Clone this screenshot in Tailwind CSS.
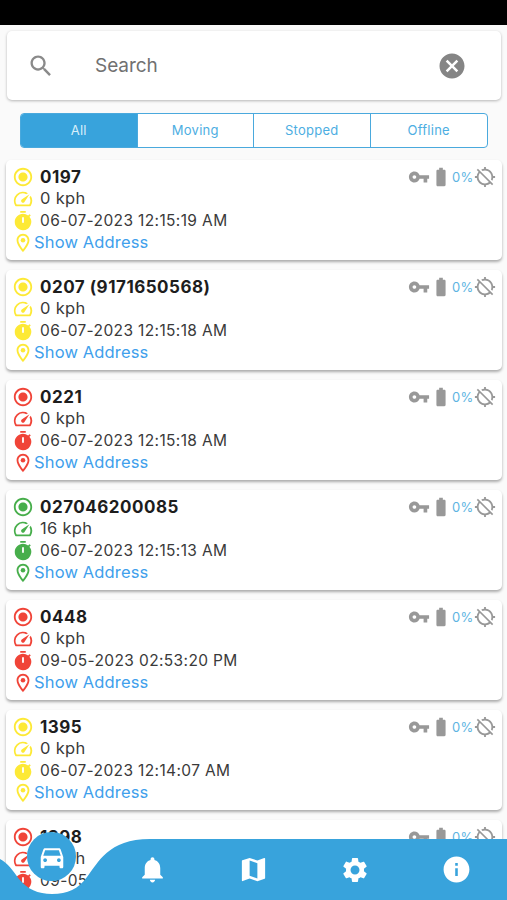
<!DOCTYPE html>
<html lang="en">
<head>
<meta charset="utf-8">
<title>Vehicles</title>
<script src="https://cdn.jsdelivr.net/npm/@tailwindcss/browser@4"></script>
</head>
<body class="bg-[#fafafa] overflow-hidden font-['Inter','Liberation_Sans',sans-serif]">
<svg class="hidden">
  <symbol id="radio" viewBox="0 0 24 24"><path d="M12 7c-2.760 0-5 2.240-5 5s2.240 5 5 5 5-2.240 5-5-2.240-5-5-5zm0-5C6.480 2 2 6.480 2 12s4.480 10 10 10 10-4.480 10-10S17.520 2 12 2zm0 18c-4.420 0-8-3.580-8-8s3.580-8 8-8 8 3.580 8 8-3.580 8-8 8z"/></symbol>
  <symbol id="speed" viewBox="0 0 24 24"><path d="M20.380 8.570l-1.230 1.850a8 8 0 0 1-.22 7.580H5.070A8 8 0 0 1 15.580 6.850l1.850-1.230A10 10 0 0 0 3.350 19a2 2 0 0 0 1.720 1h13.850a2 2 0 0 0 1.740-1 10 10 0 0 0-.27-10.440zm-9.790 6.840a2 2 0 0 0 2.830 0l5.660-8.490-8.490 5.660a2 2 0 0 0 0 2.830z"/></symbol>
  <symbol id="timer" viewBox="0 0 24 24"><path d="M19.030 7.390l1.420-1.420c-.43-.51-.9-.99-1.410-1.410l-1.420 1.420A8.960 8.960 0 0 0 12 4c-4.970 0-9 4.030-9 9s4.020 9 9 9a8.994 8.994 0 0 0 7.030-14.610M13 14h-2V8h2v6zm2-13H9v2h6V1z"/></symbol>
  <symbol id="pin" viewBox="0 0 24 24"><path d="M12 2C8.130 2 5 5.130 5 9c0 5.250 7 13 7 13s7-7.750 7-13c0-3.870-3.130-7-7-7zM7 9c0-2.760 2.240-5 5-5s5 2.240 5 5c0 2.880-2.880 7.190-5 9.880C9.920 16.210 7 11.850 7 9z"/><circle cx="12" cy="9" r="2.500"/></symbol>
  <symbol id="key" viewBox="0 0 24 24"><path d="M12.650 10C11.830 7.670 9.610 6 7 6c-3.310 0-6 2.690-6 6s2.690 6 6 6c2.610 0 4.830-1.670 5.650-4H17v4h4v-4h2v-4H12.650zM7 14c-1.100 0-2-.9-2-2s.9-2 2-2 2 .9 2 2-.9 2-2 2z"/></symbol>
  <symbol id="battery" viewBox="0 0 24 24"><path d="M15.670 4H14V2h-4v2H8.330C7.600 4 7 4.600 7 5.330v15.330C7 21.400 7.600 22 8.330 22h7.330c.74 0 1.340-.6 1.340-1.330V5.330C17 4.600 16.400 4 15.670 4z"/></symbol>
  <symbol id="gps" viewBox="0 0 24 24"><path d="M20.940 11c-.46-4.170-3.770-7.480-7.940-7.940V1h-2v2.060c-1.130.12-2.190.46-3.160.97l1.500 1.500C10.160 5.190 11.060 5 12 5c3.870 0 7 3.130 7 7 0 .94-.19 1.840-.52 2.650l1.500 1.500c.5-.96.84-2.020.97-3.150H23v-2h-2.060zM3 4.270l2.040 2.040C3.970 7.620 3.250 9.230 3.060 11H1v2h2.060c.46 4.170 3.770 7.480 7.940 7.940V23h2v-2.060c1.770-.2 3.380-.91 4.690-1.980L19.730 21 21 19.730 4.270 3 3 4.270zm13.270 13.270C15.090 18.450 13.610 19 12 19c-3.870 0-7-3.130-7-7 0-1.610.55-3.090 1.460-4.270l9.810 9.810z"/></symbol>
</svg>

<div class="h-[900px] w-[507px] overflow-hidden relative flex flex-col">
  <div class="h-[25px] bg-black shrink-0"></div>

  <div class="mt-[6px] ml-[7px] mr-[6px] h-[69px] shrink-0 bg-white rounded-[5px] shadow-[0_1px_3px_rgba(0,0,0,0.28)] flex items-center pl-5 pr-[34px]">
    <svg class="size-[28px] fill-[#8a8a8a]" viewBox="0 0 24 24"><path d="M15.500 14h-.79l-.28-.27C15.410 12.590 16 11.110 16 9.500 16 5.910 13.090 3 9.500 3S3 5.910 3 9.500 5.910 16 9.500 16c1.610 0 3.090-.59 4.230-1.570l.27.28v.79l5 4.990L20.490 19l-4.990-5zm-6 0C7.010 14 5 11.990 5 9.500S7.010 5 9.500 5 14 7.010 14 9.500 11.990 14 9.500 14z"/></svg>
    <span class="ml-10 flex-1 pt-[2px] text-[19px] tracking-[-0.05px] text-[#717171]">Search</span>
    <svg class="size-[30px] fill-[#858585]" viewBox="0 0 24 24"><path d="M12 2C6.470 2 2 6.470 2 12s4.470 10 10 10 10-4.470 10-10S17.530 2 12 2zm5 13.590L15.590 17 12 13.410 8.410 17 7 15.590 10.590 12 7 8.410 8.410 7 12 10.590 15.590 7 17 8.410 13.410 12 17 15.590z"/></svg>
  </div>

  <div class="mt-[13px] ml-5 mr-[19px] h-[35px] shrink-0 grid grid-cols-4 rounded-[4px] border border-[#4aa9dd] overflow-hidden bg-white divide-x divide-[#4aa9dd] text-[13px] tracking-[0.25px] text-[#4daee2] text-center leading-[33px]">
    <div class="bg-[#38a3dc] text-[#d9effa]">All</div>
    <div>Moving</div>
    <div>Stopped</div>
    <div>Offline</div>
  </div>

  <div id="list" class="mt-[12px] ml-[6px] mr-[5px] flex flex-col gap-[10px] shrink-0"></div>

  <nav class="absolute left-0 bottom-0 w-full h-[70px]">
    <svg class="absolute left-0 bottom-0 w-full h-[70px]" viewBox="0 830 507 70"><path fill="#38a3dc" d="M0 859C8 863 13 871 19 879C27 889 38 894 52 894C68 894 78 889 87 877C98 863 108 839 150 839H507V900H0Z"/></svg>
    <div class="absolute left-[27px] top-[2px] size-[49px] rounded-full bg-[#38a3dc] grid place-items-center">
      <svg class="size-[30px] fill-white" viewBox="0 0 24 24"><path d="M18.920 6.010C18.720 5.420 18.160 5 17.500 5h-11c-.66 0-1.210.42-1.420 1.010L3 12v8c0 .55.45 1 1 1h1c.55 0 1-.45 1-1v-1h12v1c0 .55.45 1 1 1h1c.55 0 1-.45 1-1v-8l-2.080-5.990zM6.500 16c-.83 0-1.500-.67-1.500-1.500S5.670 13 6.500 13s1.500.67 1.500 1.500S7.330 16 6.500 16zm11 0c-.83 0-1.500-.67-1.500-1.500s.67-1.500 1.500-1.500 1.500.67 1.500 1.500-.67 1.500-1.500 1.500zM5 11l1.500-4.500h11L19 11H5z"/></svg>
    </div>
    <div class="relative grid grid-cols-5 h-[60px] mt-[9.5px] place-items-center fill-white">
      <span></span>
      <svg class="size-[31px]" viewBox="0 0 24 24"><path d="M12 22c1.100 0 2-.9 2-2h-4c0 1.100.89 2 2 2zm6-6v-5c0-3.070-1.640-5.640-4.500-6.320V4c0-.83-.67-1.500-1.500-1.500s-1.500.67-1.500 1.500v.68C7.630 5.360 6 7.920 6 11v5l-2 2v1h16v-1l-2-2z"/></svg>
      <svg class="size-[31px]" viewBox="0 0 24 24"><path d="M20.500 3l-.16.030L15 5.100 9 3 3.360 4.900c-.21.070-.36.250-.36.480V20.500c0 .28.220.5.500.5l.16-.03L9 18.900l6 2.100 5.640-1.900c.21-.07.36-.25.36-.48V3.500c0-.28-.22-.5-.5-.5zM15 19l-6-2.110V5l6 2.110V19z"/></svg>
      <svg class="size-[30px]" viewBox="0 0 24 24"><path d="M19.140 12.940c.04-.3.060-.61.060-.94 0-.32-.02-.64-.07-.94l2.030-1.580c.18-.14.23-.41.12-.61l-1.920-3.320c-.12-.22-.37-.29-.59-.22l-2.390.96c-.5-.38-1.030-.7-1.620-.94l-.36-2.540c-.04-.24-.24-.41-.48-.41h-3.840c-.24 0-.43.17-.47.41l-.36 2.540c-.59.24-1.130.57-1.620.94l-2.390-.96c-.22-.08-.47 0-.59.22L2.740 8.870c-.12.21-.08.47.12.61l2.030 1.580c-.05.3-.09.630-.09.940s.02.640.070.940l-2.030 1.580c-.18.140-.23.410-.12.610l1.920 3.320c.12.220.37.290.59.220l2.390-.96c.5.380 1.030.7 1.620.940l.36 2.540c.05.240.24.410.48.410h3.840c.24 0 .44-.17.470-.41l.36-2.540c.59-.24 1.130-.56 1.620-.94l2.390.96c.22.080.47 0 .59-.22l1.920-3.320c.12-.22.070-.47-.12-.61l-2.010-1.580zM12 15.600c-1.980 0-3.600-1.620-3.600-3.600s1.620-3.600 3.600-3.600 3.600 1.620 3.600 3.600-1.620 3.600-3.600 3.600z"/></svg>
      <svg class="size-[31px]" viewBox="0 0 24 24"><path d="M12 2C6.480 2 2 6.480 2 12s4.480 10 10 10 10-4.480 10-10S17.520 2 12 2zm1 15h-2v-6h2v6zm0-8h-2V7h2v2z"/></svg>
    </div>
  </nav>
</div>

<script>
const yellow = 'fill-[#fde936]', red = 'fill-[#f04438]', green = 'fill-[#47ae4b]';
const vehicles = [
  ['0197', '0 kph', '06-07-2023 12:15:19 AM', yellow],
  ['0207 (9171650568)', '0 kph', '06-07-2023 12:15:18 AM', yellow],
  ['0221', '0 kph', '06-07-2023 12:15:18 AM', red],
  ['027046200085', '16 kph', '06-07-2023 12:15:13 AM', green],
  ['0448', '0 kph', '09-05-2023 02:53:20 PM', red],
  ['1395', '0 kph', '06-07-2023 12:14:07 AM', yellow],
  ['1398', '0 kph', '09-05-2023 02:53:20 PM', red],
];
document.getElementById('list').innerHTML = vehicles.map(([name, speed, time, color]) => `
  <article class="h-[100px] bg-white rounded-[5px] shadow-[0_2px_3px_rgba(0,0,0,0.32)] flex justify-between pl-[6px] pr-[6px] pt-[6px] text-[#3a3a3a] ${color}">
    <div>
      <div class="flex items-center h-[22px] gap-[6px]"><svg class="size-[22px]"><use href="#radio"/></svg><b class="pt-px text-[17px] font-bold tracking-[0.5px] text-[#1d1d1d]">${name}</b></div>
      <div class="flex items-center h-[22px] gap-[6px]"><svg class="size-[22px]"><use href="#speed"/></svg><span class="pb-px text-[16.5px] tracking-[0.3px]">${speed}</span></div>
      <div class="flex items-center h-[22px] gap-[6px]"><svg class="size-[22px]"><use href="#timer"/></svg><span class="text-[15.5px] tracking-[0.37px]">${time}</span></div>
      <div class="flex items-center h-[22px]"><svg class="size-[22px]"><use href="#pin"/></svg><span class="pb-px text-[16.500px] tracking-[0.15px] text-[#409fec]">Show Address</span></div>
    </div>
    <div class="flex items-center h-[22px] fill-[#989898]">
      <svg class="size-[22px]"><use href="#key"/></svg>
      <svg class="size-[22px]"><use href="#battery"/></svg>
      <span class="pt-px text-[13px] tracking-[0.3px] text-[#5db4e2] w-[22px]">0%</span>
      <svg class="size-[22px]"><use href="#gps"/></svg>
    </div>
  </article>`).join('');
</script>
</body>
</html>
